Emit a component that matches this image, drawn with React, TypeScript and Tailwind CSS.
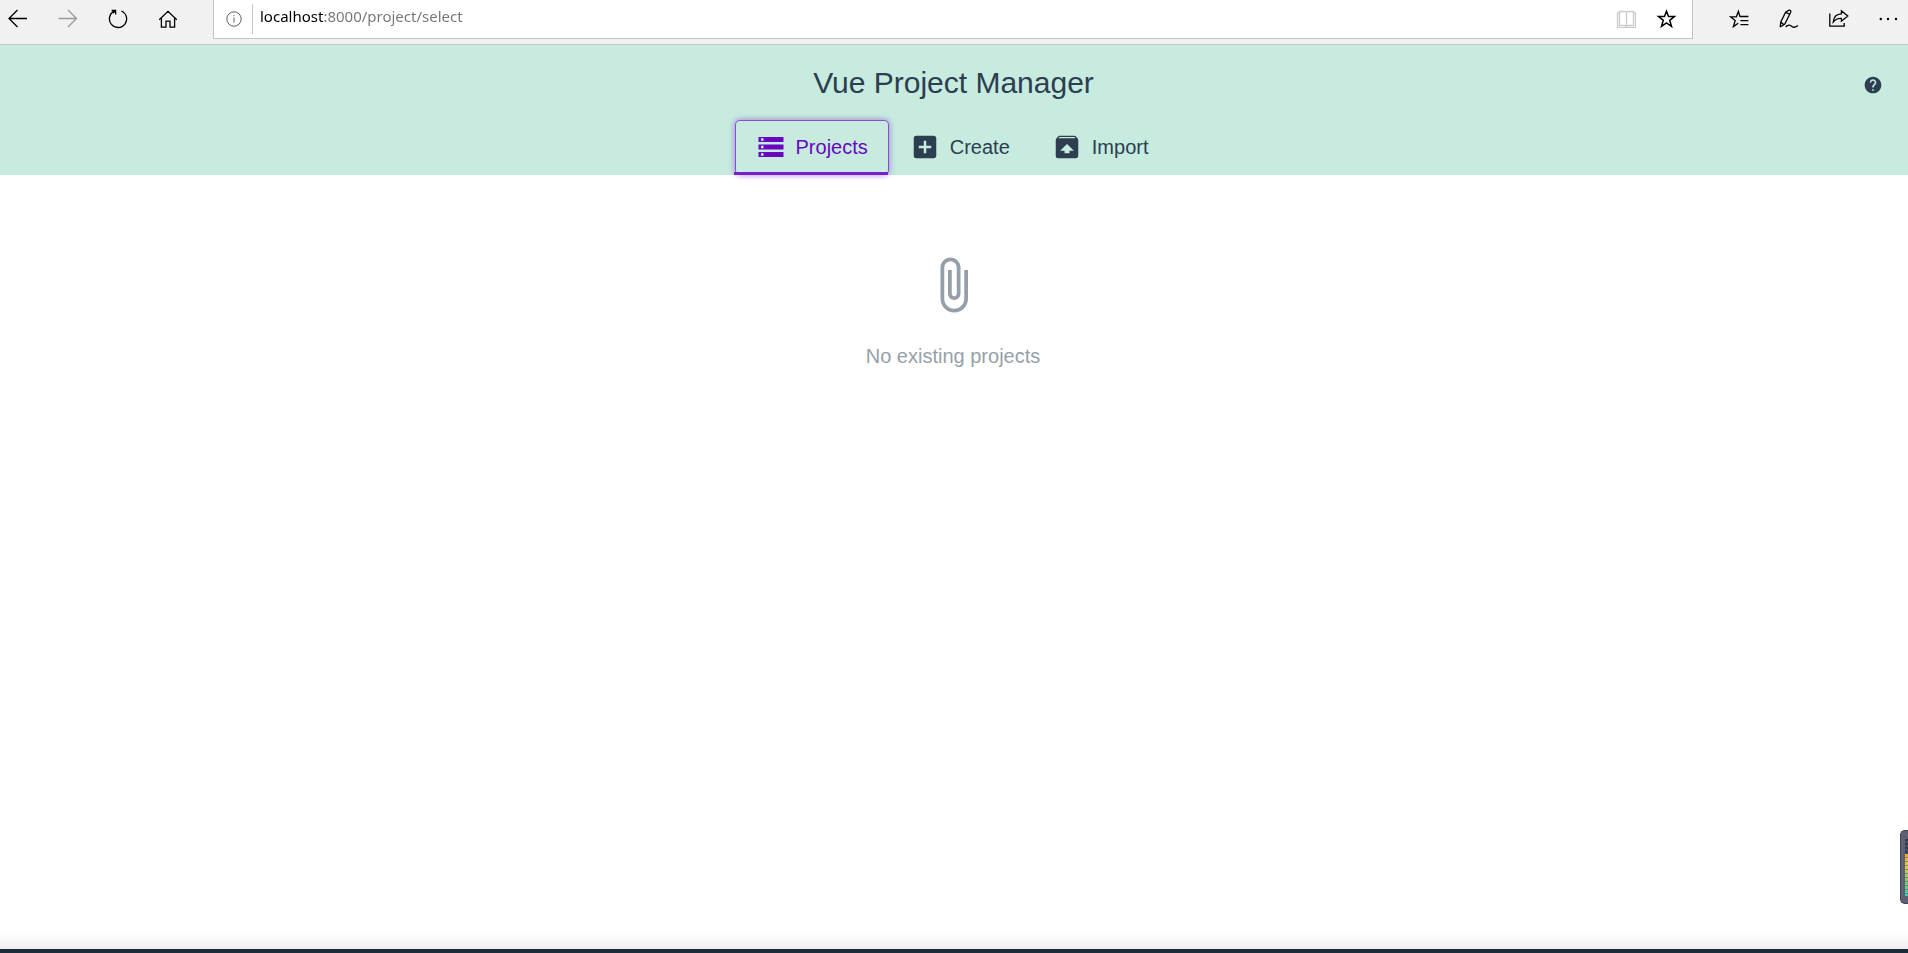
import type { ReactNode } from "react";
import { MdAddBox, MdAttachFile, MdHelp, MdStorage, MdUnarchive } from "react-icons/md";
import type { IconType } from "react-icons";

interface GlyphProps {
  children: ReactNode;
  strokeWidth?: number;
}

function Glyph({ children, strokeWidth = 1.3 }: GlyphProps) {
  return (
    <svg width="20" height="20" viewBox="0 0 20 20" fill="none" stroke="currentColor" strokeWidth={strokeWidth} aria-hidden="true">
      {children}
    </svg>
  );
}

const STAR = "M10.5 2.2 12.5 7.6H18.4L13.7 11.3 15.5 17.4 10.5 13.8 5.5 17.4 7.3 11.3 2.6 7.6H8.5Z";

const NAV_BUTTONS = [
  { label: "Back", className: "text-black", icon: <path d="M19 9.5H1M9.5 1 1 9.5 9.5 18" /> },
  { label: "Forward", className: "text-[#9a9a9a]", icon: <path d="M0.5 9.5H18.5M10 1 18.5 9.5 10 18" /> },
  {
    label: "Refresh",
    className: "text-black",
    icon: <path d="M13.4 2A8.6 8.6 0 1 1 6.2 2.2M3.6 1.5H7.6V5.6M7.4 1.7 5 4" />,
  },
  {
    label: "Home",
    className: "text-black",
    icon: <path d="M1.2 10.8 10 2.4 18.8 10.8M3.4 9V18.2H8V12.2H12V18.2H16.6V9" />,
  },
];

const TOOL_BUTTONS = [
  {
    label: "Favorites",
    icon: <path d="M11 7.8 9.4 2.4 7.4 7.8H1.4L6.2 11.4 4.4 17.6 9.2 14.2M11 7.5H19.4M11.4 11.7H19.4M11.4 15.6H19.4" />,
  },
  {
    label: "Add notes",
    icon: <path d="M1.2 18 1.8 13 6.6 3.2 10 1.2C11.4 0.9 12.2 2 11.6 3.6L5.8 15 1.2 18M6.6 3.2 10.6 5.4M1.8 13 4.6 15.4M6.8 18C8.8 15.6 10.8 15.8 12.6 17.2S16.6 18.6 19 16.6" />,
  },
  {
    label: "Share",
    icon: <path d="M0.8 4.6V17.2H15.2V14M12.4 1.8 18.8 7 12.4 12.2V9.4C8.6 9.2 6.4 10.2 4.2 13 4.6 8.2 7.6 5 12.4 4.8Z" />,
  },
  {
    label: "More",
    icon: (
      <g fill="currentColor" stroke="none">
        <circle cx="1.8" cy="10" r="1.2" />
        <circle cx="9" cy="10" r="1.2" />
        <circle cx="17" cy="10" r="1.2" />
      </g>
    ),
  },
];

const TABS: { label: string; icon: IconType; active?: boolean }[] = [
  { label: "Projects", icon: MdStorage, active: true },
  { label: "Create", icon: MdAddBox },
  { label: "Import", icon: MdUnarchive },
];

function BrowserBar() {
  return (
    <div className="flex items-start h-[45px] pl-2 pr-[9px] bg-[#f1f1f1] border-b border-[#c4c4c4]">
      <div className="flex items-center gap-[30px] h-[38px]">
        {NAV_BUTTONS.map((b) => (
          <button key={b.label} aria-label={b.label} className={`w-5 h-5 ${b.className}`}>
            <Glyph>{b.icon}</Glyph>
          </button>
        ))}
      </div>

      {/* Address bar */}
      <div className="flex flex-1 items-center h-[39px] ml-[35px] pl-[10px] pr-4 bg-white border border-t-0 border-[#c4c4c4]">
        <button aria-label="Site information" className="w-5 h-5 text-[#606060]">
          <Glyph strokeWidth={1}>
            <circle cx="10" cy="10" r="7.2" />
            <path d="M10 8.5V13.5M10 6V7.2" />
          </Glyph>
        </button>
        <div className="w-px h-[30px] ml-2 bg-[#c8c8c8]" />
        <input
          type="text"
          aria-label="Address"
          defaultValue="localhost:8000/project/select"
          className="flex-1 min-w-0 h-[30px] ml-[7px] pb-1.5 font-['Noto_Sans',sans-serif] text-[15px] text-transparent bg-clip-text bg-[linear-gradient(to_right,#000_64px,#757575_64px)] outline-none"
        />
        <div className="flex items-center gap-5">
          <button aria-label="Reading view" className="w-5 h-5 text-[#cbcbcb]">
            <Glyph>
              <path d="M3.5 2.5H8.6L10.5 3.2 12.4 2.5H17.5V16.4H12.4L10.5 17 8.6 16.4H3.5ZM10.5 3.2V17M3.5 4H1.5V18.4H19.5V4H17.5" />
            </Glyph>
          </button>
          <button aria-label="Add to favorites" className="w-5 h-5 text-black">
            <Glyph strokeWidth={1.5}><path d={STAR} /></Glyph>
          </button>
        </div>
      </div>

      <div className="flex items-center gap-[30px] h-[38px] ml-9 text-black">
        {TOOL_BUTTONS.map((b) => (
          <button key={b.label} aria-label={b.label} className="w-5 h-5">
            <Glyph>{b.icon}</Glyph>
          </button>
        ))}
      </div>
    </div>
  );
}

function Header() {
  return (
    <header className="bg-[#c7ebdf]">
      <div className="grid grid-cols-[1fr_auto_1fr] items-center h-[75px] pl-6 pr-[25px]">
        <h1 className="col-start-2 text-[30px] leading-9">Vue Project Manager</h1>
        <button aria-label="Help" className="justify-self-end mt-1">
          <MdHelp size={20} />
        </button>
      </div>

      <nav className="flex justify-center pr-1">
        {TABS.map(({ label, icon: Icon, active }) => (
          <button
            key={label}
            className={`relative flex items-center gap-[10px] h-[55px] px-[21px] pb-0.5 text-xl ${
              active ? "text-[#6806c1] rounded-[5px] ring-1 ring-inset ring-[#8c4bd0] shadow-[0_0_6px_#6806c180]" : ""
            }`}
          >
            <Icon size={30} />
            {label}
            {active && <span className="absolute -left-px right-px bottom-0 h-[3px] bg-[#7a1fc9]" />}
          </button>
        ))}
      </nav>
    </header>
  );
}

// Floating level meter docked to the window edge
function LevelMeter() {
  return (
    <div className="absolute right-0 bottom-[49px] w-2 h-[74px] py-2 pl-1 bg-[#5b6173] border border-r-0 border-[#3f4454] rounded-l-[5px]">
      <div className="h-[15px] bg-[repeating-linear-gradient(to_bottom,#353a49_0_2px,#4a5062_2px_4px)]" />
      <div className="h-[42px] bg-[linear-gradient(to_bottom,#f0a52e,#d8cf45_30%,#8fc962_60%,#3fcfae)]">
        <div className="h-full bg-[repeating-linear-gradient(to_bottom,transparent_0_3px,#4a506280_3px_4px)]" />
      </div>
    </div>
  );
}

export default function App() {
  return (
    <div className="relative flex flex-col min-h-screen bg-white text-[#2c3e50] font-['Liberation_Sans',Arial,sans-serif]">
      <BrowserBar />
      <Header />
      <main className="flex flex-1 flex-col items-center pt-20 pr-0.5 text-[#969fa8]">
        <MdAttachFile size={60} />
        <p className="mt-[27px] text-xl">No existing projects</p>
      </main>
      <footer>
        <div className="h-4 bg-linear-to-b from-white to-[#eeeeee]" />
        <div className="h-1 bg-[#1c2b3a]" />
      </footer>
      <LevelMeter />
    </div>
  );
}
